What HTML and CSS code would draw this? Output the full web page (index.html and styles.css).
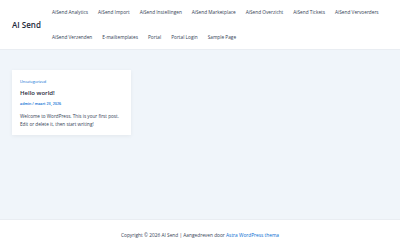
FILE: index.html
```html
<!DOCTYPE html>
<html lang="nl">
<head>
<meta charset="utf-8">
<title>AI Send</title>
<link rel="stylesheet" href="styles.css">
</head>
<body>
<header class="site-header">
  <div class="site-title">AI Send</div>
  <nav class="main-nav">
    <ul class="menu">
      <li><a href="#">AiSend Analytics</a></li>
      <li><a href="#">AiSend Import</a></li>
      <li><a href="#">AiSend Instellingen</a></li>
      <li><a href="#">AiSend Marketplace</a></li>
      <li><a href="#">AiSend Overzicht</a></li>
      <li><a href="#">AiSend Tickets</a></li>
      <li><a href="#">AiSend Vervoerders</a></li>
      <li><a href="#">AiSend Verzenden</a></li>
      <li><a href="#">E-mailtemplates</a></li>
      <li><a href="#">Portal</a></li>
      <li><a href="#">Portal Login</a></li>
      <li><a href="#">Sample Page</a></li>
    </ul>
  </nav>
</header>
<main class="content">
  <article class="post-card">
    <a class="cat" href="#">Uncategorized</a>
    <h2 class="post-title">Hello world!</h2>
    <div class="meta"><a href="#">admin</a> / <a href="#">maart 23, 2026</a></div>
    <p class="excerpt">Welcome to WordPress. This is your first post. Edit or delete it, then start writing!</p>
  </article>
</main>
<footer class="site-footer">
  <span>Copyright © 2026 AI Send | Aangedreven door <a href="#">Astra WordPress thema</a></span>
</footer>
</body>
</html>
```

FILE: styles.css
```css
html, body {
  margin: 0;
  padding: 0;
}
body {
  font-family: "Open Sans", "Noto Sans", sans-serif;
  color: #334155;
  background: #fff;
  width: 400px;
  height: 250px;
  display: flex;
  flex-direction: column;
}
a {
  color: #046bd2;
  text-decoration: none;
}
.site-header {
  height: 50px;
  display: flex;
  align-items: center;
  padding: 0 12px;
  border-bottom: 1px solid #e9edf2;
  box-sizing: border-box;
}
.site-title {
  font-size: 8px;
  font-weight: 600;
  color: #1e293b;
  width: 40px;
  flex: none;
}
.main-nav {
  flex: 1;
}
.menu {
  list-style: none;
  margin: 0;
  padding: 0;
  display: flex;
  flex-wrap: wrap;
  column-gap: 10px;
}
.menu li {
  height: 25px;
  display: flex;
  align-items: center;
}
.menu a {
  font-size: 4.75px;
  color: #334155;
}
.content {
  flex: 1;
  background: #f0f5fa;
  padding: 20px 12px;
}
.post-card {
  width: 103px;
  background: #fff;
  padding: 8px 8px 7px;
  box-shadow: 0 1px 4px rgba(0,0,0,0.06);
}
.cat {
  display: block;
  font-size: 3.9px;
  font-weight: 500;
  line-height: 7px;
}
.post-title {
  margin: 4px 0 0;
  font-size: 6px;
  font-weight: 600;
  color: #1e293b;
  line-height: 9px;
}
.meta {
  font-size: 3.7px;
  font-weight: 600;
  color: #046bd2;
  line-height: 7px;
  margin-top: 2px;
}
.excerpt {
  margin: 5px 0 0;
  font-size: 4.65px;
  line-height: 8px;
}
.site-footer {
  height: 31px;
  border-top: 1px solid #e9edf2;
  box-sizing: border-box;
  display: flex;
  align-items: center;
  justify-content: center;
  font-size: 4.8px;
  color: #334155;
}
```
